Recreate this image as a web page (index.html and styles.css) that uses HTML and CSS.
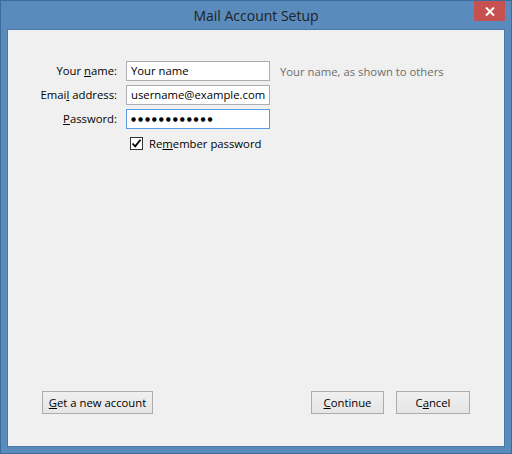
FILE: index.html
```html
<!DOCTYPE html>
<html>
<head>
<meta charset="utf-8">
<link rel="stylesheet" href="styles.css">
</head>
<body>
<div class="window">
  <div class="titlebar">
    <span class="title">Mail Account Setup</span>
    <div class="close">
      <svg width="10" height="9" viewBox="0 0 10 9"><path d="M1 0.5 L9 8.5 M9 0.5 L1 8.5" stroke="#fff" stroke-width="2"/></svg>
    </div>
  </div>
  <div class="client">
    <div class="form">
      <label class="lbl">Your <u>n</u>ame:</label>
      <div class="field">Your name</div>
      <span class="hint">Your name, as shown to others</span>

      <label class="lbl">Emai<u>l</u> address:</label>
      <div class="field">username@example.com</div>
      <span></span>

      <label class="lbl"><u>P</u>assword:</label>
      <div class="field focus"><span class="dots">●●●●●●●●●●●●</span></div>
      <span></span>

      <span></span>
      <div class="check-row">
        <span class="checkbox">
          <svg width="11" height="11" viewBox="0 0 11 11"><path d="M1.5 5.5 L4.2 8.3 L9.5 1.8" fill="none" stroke="#000" stroke-width="1.8"/></svg>
        </span>
        <span class="check-label">Re<u>m</u>ember password</span>
      </div>
      <span></span>
    </div>
    <div class="buttons">
      <button class="btn btn-wide"><u>G</u>et a new account</button>
      <div class="btn-group">
        <button class="btn btn-cont"><u>C</u>ontinue</button>
        <button class="btn btn-cancel">C<u>a</u>ncel</button>
      </div>
    </div>
  </div>
</div>
</body>
</html>
```

FILE: styles.css
```css
html, body {
  margin: 0;
  padding: 0;
  background: #5a8bbd;
}
body {
  font-family: "Open Sans", "Noto Sans", sans-serif;
  font-size: 11.3px;
  color: #000;
}
.window {
  width: 512px;
  height: 454px;
  box-sizing: border-box;
  border: 1px solid #3d6b9b;
  background: #5a8bbd;
  display: flex;
  flex-direction: column;
}
.titlebar {
  position: relative;
  height: 28px;
  display: flex;
  justify-content: center;
  align-items: flex-start;
}
.title {
  font-size: 14px;
  color: #222;
  line-height: 20px;
  margin-top: 5px;
}
.close {
  position: absolute;
  top: 0;
  right: 6px;
  width: 31px;
  height: 20px;
  background: #c75050;
  display: flex;
  align-items: center;
  justify-content: center;
}
.client {
  flex: 1;
  margin: 0 6px 6px 6px;
  border: 1px solid #4a77a6;
  background: #f0f0f0;
  display: flex;
  flex-direction: column;
  justify-content: space-between;
}
.form {
  display: grid;
  grid-template-columns: 109px 144px auto;
  column-gap: 9px;
  row-gap: 4px;
  padding-top: 31px;
  align-items: center;
}
.lbl {
  text-align: right;
  line-height: 20px;
  white-space: nowrap;
}
.field {
  box-sizing: border-box;
  height: 20px;
  border: 1px solid #abadb3;
  background: #fff;
  padding: 0 4px;
  line-height: 18px;
  white-space: nowrap;
  overflow: hidden;
}
.field.focus {
  border-color: #569de5;
  display: flex;
  align-items: center;
}
.dots {
  font-family: "DejaVu Sans", sans-serif;
  font-size: 5.8px;
  letter-spacing: 1.9px;
  line-height: 18px;
}
.hint {
  color: #6d6d6d;
  margin-left: 1px;
  white-space: nowrap;
}
.check-row {
  display: flex;
  align-items: center;
  padding-left: 4px;
  height: 20px;
}
.checkbox {
  box-sizing: border-box;
  width: 13px;
  height: 13px;
  border: 1px solid #333;
  background: #fff;
  display: flex;
  align-items: center;
  justify-content: center;
}
.check-label {
  margin-left: 6px;
  white-space: nowrap;
}
.buttons {
  display: flex;
  justify-content: space-between;
  padding: 0 34px 32px 34px;
}
.btn-group {
  display: flex;
  gap: 12px;
}
.btn {
  font-family: inherit;
  font-size: 11.3px;
  color: #000;
  height: 23px;
  box-sizing: border-box;
  border: 1px solid #acacac;
  background: linear-gradient(#f0f0f0, #e5e5e5);
  padding: 0;
  margin: 0;
  line-height: 20px;
}
.btn-wide { width: 111px; }
.btn-cont { width: 73px; }
.btn-cancel { width: 74px; }
```
